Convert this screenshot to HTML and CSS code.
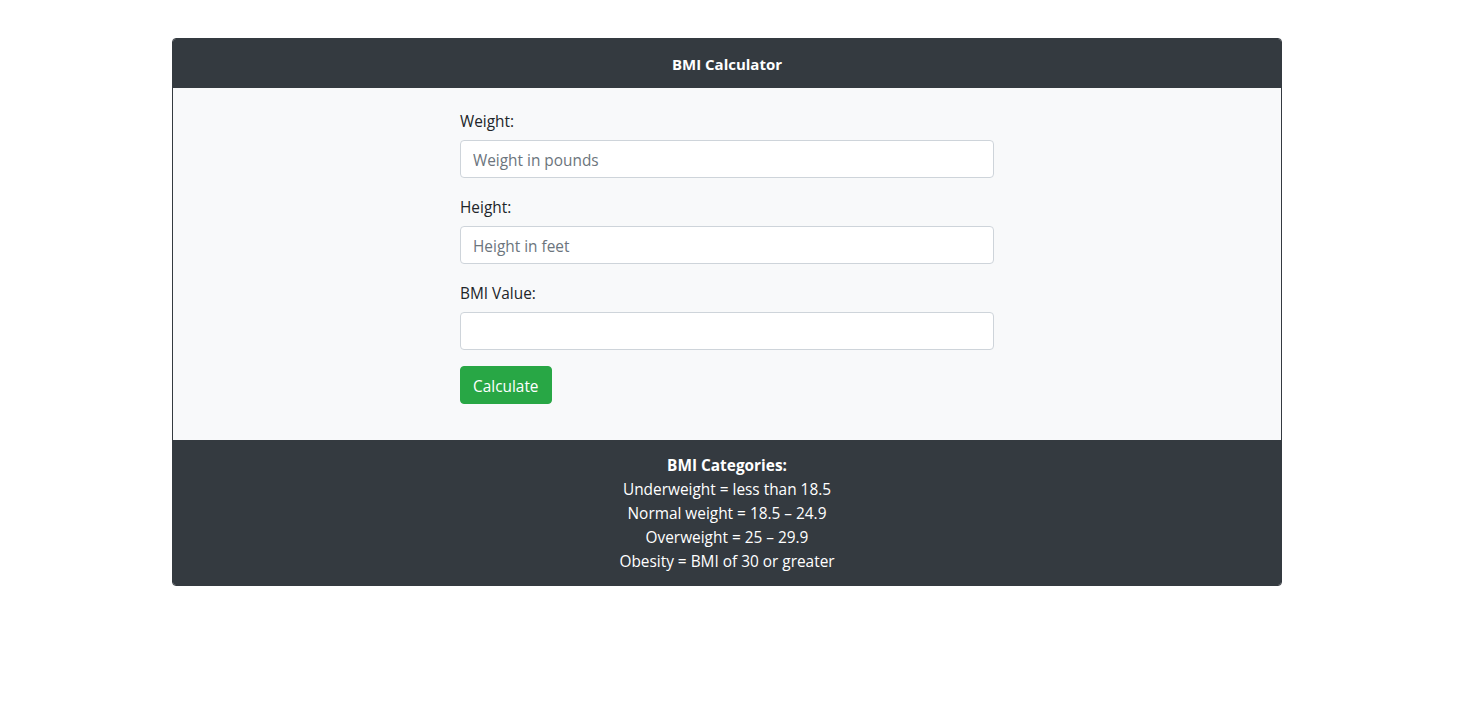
FILE: index.html
```html
<!DOCTYPE html>
<html>
<head>
<meta charset="utf-8">
<title>BMI Calculator</title>
<link rel="stylesheet" href="styles.css">
</head>
<body>
<div class="page">
  <div class="card">
    <div class="card-header">BMI Calculator</div>
    <div class="card-body">
      <form class="calc">
        <div class="form-group">
          <label class="label">Weight:</label>
          <input class="field" type="text" placeholder="Weight in pounds">
        </div>
        <div class="form-group">
          <label class="label">Height:</label>
          <input class="field" type="text" placeholder="Height in feet">
        </div>
        <div class="form-group">
          <label class="label">BMI Value:</label>
          <input class="field" type="text">
        </div>
        <div class="form-group">
          <button class="btn" type="button">Calculate</button>
        </div>
      </form>
    </div>
    <div class="card-footer">
      <div class="cat-title">BMI Categories:</div>
      <div>Underweight = less than 18.5</div>
      <div>Normal weight = 18.5 – 24.9</div>
      <div>Overweight = 25 – 29.9</div>
      <div>Obesity = BMI of 30 or greater</div>
    </div>
  </div>
</div>
</body>
</html>
```

FILE: styles.css
```css
html, body {
  margin: 0;
  padding: 0;
  background: #ffffff;
}
body {
  font-family: "Open Sans", "Noto Sans", sans-serif;
  font-size: 15.4px;
  line-height: 24px;
  color: #212529;
}
.page {
  padding: 38px 0 0 172px;
}
.card {
  width: 1110px;
  box-sizing: border-box;
  border: 1px solid #343a40;
  border-radius: 4px;
  overflow: hidden;
  background: #f8f9fa;
}
.card-header {
  background: #343a40;
  color: #ffffff;
  font-weight: 700;
  font-size: 15px;
  text-align: center;
  padding: 13px 20px 11px;
  border-bottom: 1px solid #343a40;
}
.card-body {
  padding: 20px;
}
.calc {
  width: 534px;
  margin: 0 auto;
}
.form-group {
  margin-bottom: 16px;
}
.label {
  display: block;
  padding-top: 2px;
  margin-bottom: 6px;
}
.field {
  display: block;
  width: 100%;
  box-sizing: border-box;
  height: 38px;
  padding: 7px 12px 5px;
  font-family: inherit;
  font-size: 15.4px;
  line-height: 24px;
  color: #495057;
  background: #ffffff;
  border: 1px solid #ced4da;
  border-radius: 4px;
  outline: none;
}
.field::placeholder {
  color: #6c757d;
  opacity: 1;
}
.btn {
  font-family: inherit;
  font-size: 15.4px;
  line-height: 24px;
  height: 38px;
  padding: 8px 12px 4px;
  color: #ffffff;
  background: #28a745;
  border: 1px solid #28a745;
  border-radius: 4px;
}
.card-footer {
  background: #343a40;
  color: #ffffff;
  text-align: center;
  padding: 13px 20px 11px;
  border-top: 1px solid #343a40;
}
.cat-title {
  font-weight: 700;
}
```
